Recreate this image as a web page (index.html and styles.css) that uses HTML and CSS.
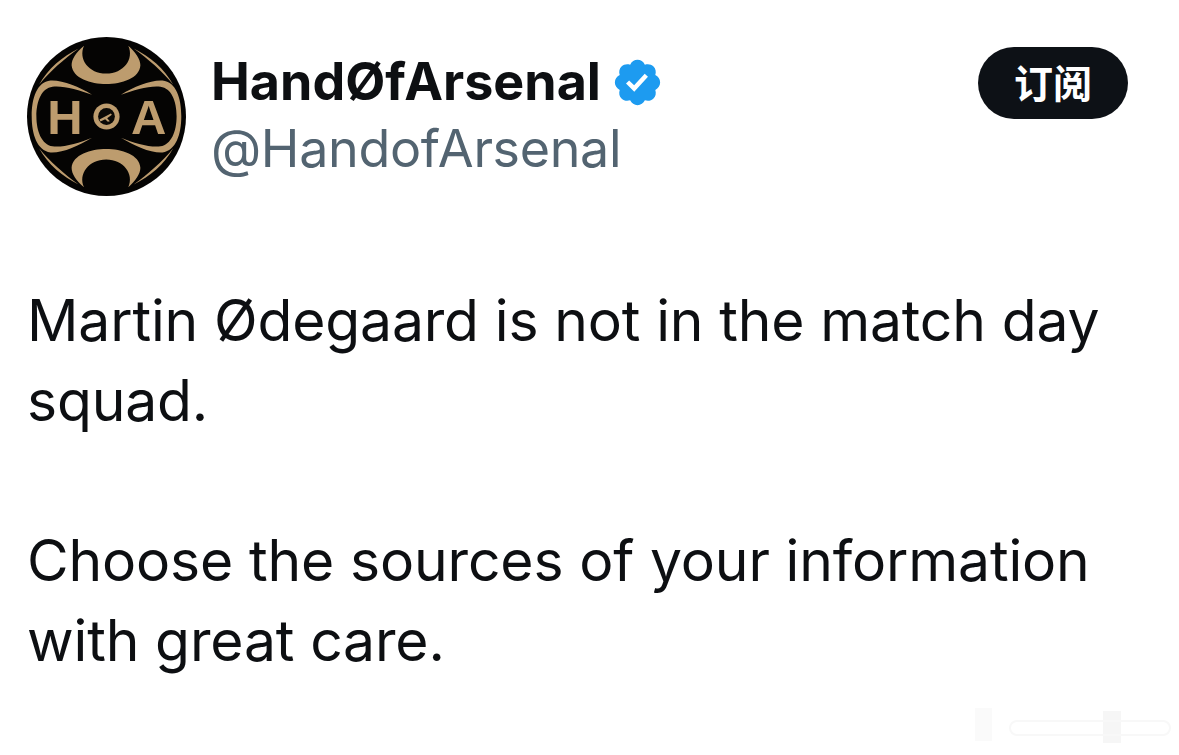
FILE: index.html
```html
<!DOCTYPE html>
<html lang="en">
<head>
<meta charset="utf-8">
<title>HandØfArsenal</title>
<link rel="stylesheet" href="styles.css">
</head>
<body>
<main class="tweet">
  <header class="head">
    <svg class="avatar" viewBox="22 22 474 474" aria-hidden="true">
      <defs>
        <g id="crescent">
          <path d="M192 48C168 68 155 88 155 106C158 145 212 162 258 162C304 162 358 145 360 106C360 88 346 68 324 48C342 88 310 131 258 131C206 131 174 88 192 48Z"/>
          <path d="M176 56C128 80 84 116 58 164C90 124 132 88 176 56Z"/>
          <path d="M340 56C388 80 432 116 458 164C426 124 384 88 340 56Z"/>
        </g>
        <path id="wave" d="M216 194C176 170 128 150 92 152C52 156 36 204 36 258C36 312 52 360 92 366C128 368 176 346 216 322C176 338 130 352 98 348C66 342 50 304 50 258C50 212 66 174 98 170C130 166 176 180 216 194Z"/>
      </defs>
      <circle cx="259" cy="259" r="237" fill="#050403"/>
      <g fill="#bd9c6e">
        <use href="#crescent"/>
        <use href="#crescent" transform="matrix(1 0 0 -1 0 518)"/>
        <use href="#wave"/>
        <use href="#wave" transform="matrix(-1 0 0 1 518 0)"/>
        <circle cx="259" cy="259" r="39"/>
      </g>
      <circle cx="259" cy="259" r="25" fill="#0b0906"/>
      <path d="M238 268l34-18 3 4-14 10 8 9-6 2-8-8-14 7z" fill="#bd9c6e"/>
      <text class="logo-letter" x="135" y="310" text-anchor="middle">H</text>
      <text class="logo-letter" x="385" y="310" text-anchor="middle">A</text>
    </svg>
    <div class="identity">
      <div class="name-row">
        <span class="name">HandØfArsenal</span>
        <svg class="badge" viewBox="0 0 24 24" aria-hidden="true"><path fill="#1d9bf0" d="M22.25 12c0-1.43-.88-2.67-2.19-3.34.46-1.39.2-2.9-.81-3.91s-2.52-1.27-3.91-.81c-.66-1.31-1.91-2.19-3.34-2.19s-2.67.88-3.33 2.19c-1.4-.46-2.91-.2-3.92.81s-1.26 2.52-.8 3.91c-1.31.67-2.2 1.91-2.2 3.34s.89 2.67 2.2 3.34c-.46 1.39-.21 2.9.8 3.91s2.52 1.26 3.91.81c.67 1.31 1.91 2.19 3.34 2.19s2.68-.88 3.34-2.19c1.39.45 2.9.2 3.91-.81s1.27-2.52.81-3.91c1.31-.67 2.19-1.91 2.19-3.34zm-11.71 4.2L6.8 12.46l1.41-1.42 2.26 2.26 4.8-5.23 1.47 1.36-6.2 6.77z"/></svg>
      </div>
      <div class="handle">@HandofArsenal</div>
    </div>
    <button class="subscribe" type="button">订阅</button>
  </header>
  <div class="body">
    <p>Martin Ødegaard is not in the match day squad.</p>
    <p>Choose the sources of your information with great care.</p>
  </div>
</main>
<svg class="watermark" viewBox="0 0 229 60" aria-hidden="true">
  <rect x="25" y="13" width="17" height="33" fill="#fafafa"/>
  <rect x="153" y="16" width="18" height="32" fill="#f6f6f6"/>
  <rect x="60" y="26" width="160" height="14" rx="7" fill="none" stroke="#f8f8f8" stroke-width="2"/>
</svg>
</body>
</html>
```
FILE: styles.css
```css
* { box-sizing: border-box; }
html, body { margin: 0; padding: 0; height: 100%; }
body {
  background: #fff;
  color: #0d0f12;
  font-family: "Inter", "Noto Sans CJK SC", sans-serif;
  overflow: hidden;
  position: relative;
}
.tweet { padding: 37px 51px 0 27px; }
.head { display: flex; align-items: flex-start; }
.avatar { width: 159px; height: 159px; flex: none; }
.logo-letter {
  font-family: "Liberation Sans", sans-serif;
  font-size: 146px;
  font-weight: 700;
  fill: #bd9c6e;
}
.identity { margin-left: 25px; flex: 1; padding-top: 12px; }
.name-row { display: flex; align-items: center; height: 66px; }
.name { font-size: 52px; font-weight: 700; line-height: 66px; }
.badge { width: 53px; height: 53px; margin-left: 10px; }
.handle { font-size: 52px; line-height: 68px; color: #536471; letter-spacing: -0.35px; }
.subscribe {
  margin-top: 10px;
  width: 150px;
  height: 72px;
  border: 0;
  border-radius: 36px;
  background: #0d1116;
  color: #fff;
  font-family: "Noto Sans CJK SC", sans-serif;
  font-size: 39px;
  font-weight: 700;
  padding: 0 0 4px;
}
.body { margin-top: 85px; font-size: 57px; line-height: 80px; letter-spacing: -0.15px; }
.body p { margin: 0 0 80px; }
.watermark { position: absolute; right: 0; bottom: 0; width: 229px; height: 60px; }
```
